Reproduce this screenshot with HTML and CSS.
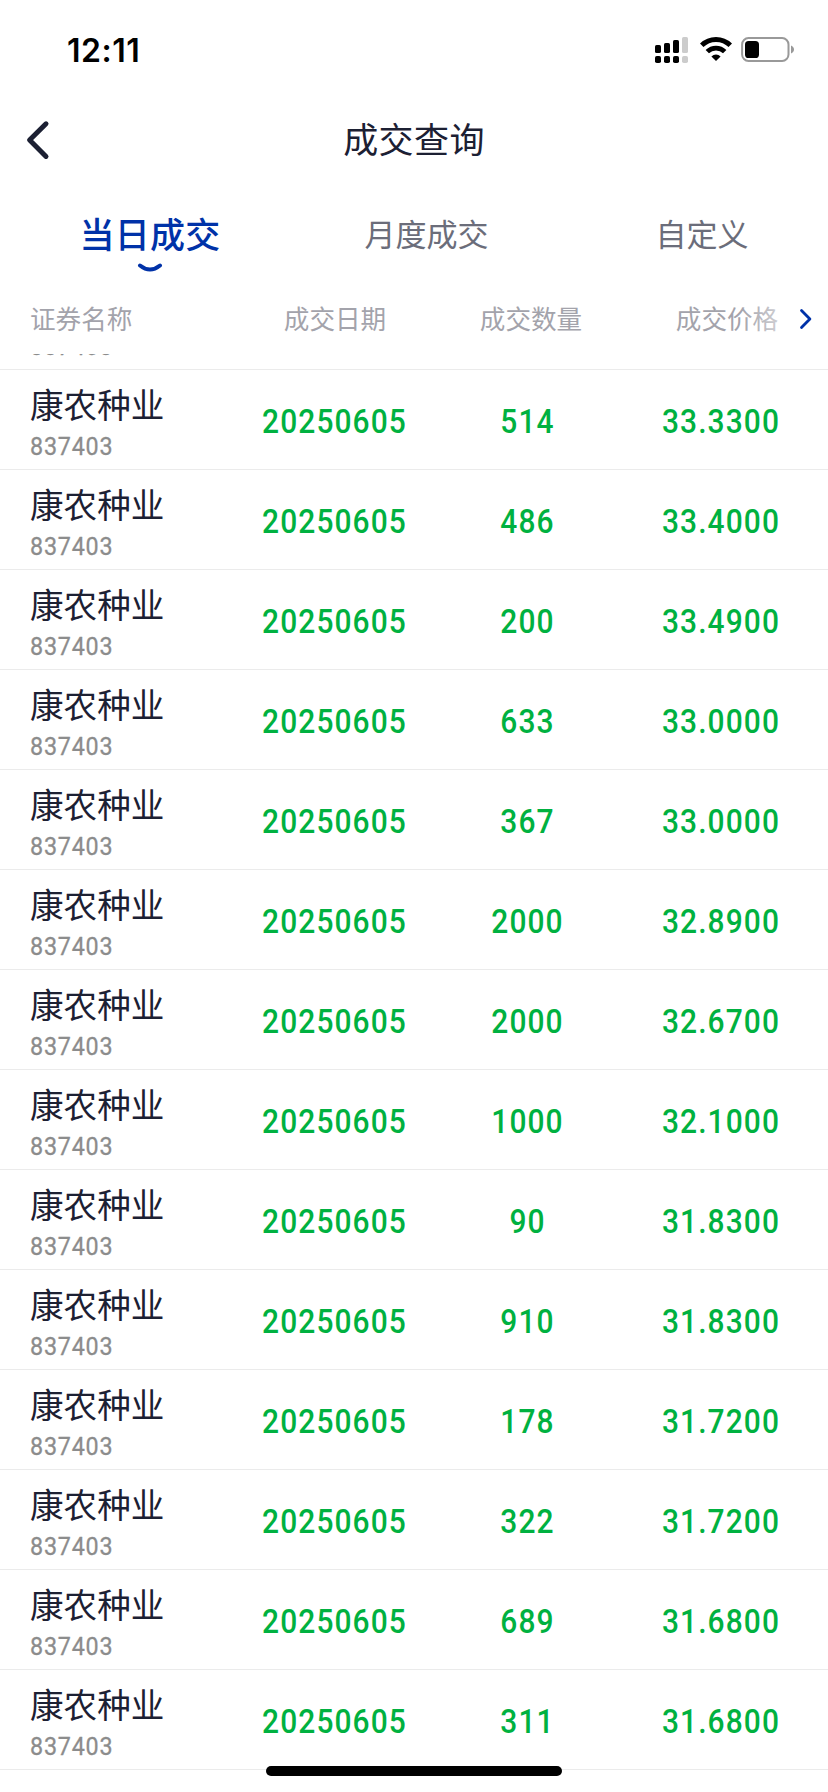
FILE: index.html
```
<!DOCTYPE html>
<html lang="zh-CN">
<head>
    <meta charset="UTF-8">
    <meta name="viewport" content="width=device-width, initial-scale=1.0">
    <title>成交查询</title>
    <link rel="stylesheet" href="styles.css">
</head>
<body>
<div class="status-bar">
    <span class="time">12:11</span>
    <div class="status-icons">
        <svg class="signal" width="34" height="28" viewBox="0 0 34 28">
            <rect x="0" y="9" width="6" height="8" rx="1.6"/>
            <rect x="9" y="7" width="6" height="10" rx="1.6"/>
            <rect x="18" y="4" width="6" height="13" rx="1.6"/>
            <rect class="off" x="27" y="1" width="6" height="16" rx="1.6"/>
            <rect x="0" y="20" width="6" height="7" rx="1.8"/>
            <rect x="9" y="20" width="6" height="7" rx="1.8"/>
            <rect x="18" y="20" width="6" height="7" rx="1.8"/>
            <rect class="off" x="27" y="20" width="6" height="7" rx="1.8"/>
        </svg>
        <svg class="wifi" width="32" height="28" viewBox="0 0 32 28">
            <path d="M1.7 9.3a20.3 20.3 0 0 1 28.6 0" fill="none" stroke="#000" stroke-width="5"/>
            <path d="M7.3 15.6a12.4 12.4 0 0 1 17.4 0" fill="none" stroke="#000" stroke-width="4.8"/>
            <path d="M16 25l-4.6-4.5a6.5 6.5 0 0 1 9.2 0z"/>
        </svg>
        <svg class="battery" width="54" height="28" viewBox="0 0 54 28">
            <rect x="1.1" y="2.1" width="46.4" height="22.8" rx="6.4" fill="none" stroke="#999" stroke-width="2"/>
            <rect x="4" y="5" width="14" height="17" rx="3.6"/>
            <path d="M50 9.5c4 1.6 4 6.4 0 8z" fill="#999"/>
        </svg>
    </div>
</div>

<div class="nav-bar">
    <svg class="back" width="24" height="40" viewBox="0 0 24 40">
        <path d="M20 3.8L3.6 20L20 36.4"/>
    </svg>
    <h1>成交查询</h1>
</div>

<div class="tabs">
    <div class="tab active">
        当日成交
        <svg class="smile" width="26" height="10" viewBox="0 0 26 10">
            <path d="M3 2.5q10 8 20 0"/>
        </svg>
    </div>
    <div class="tab">月度成交</div>
    <div class="tab custom">自定义</div>
</div>

<div class="table-head">
    <span class="name-head">证券名称</span>
    <span>成交日期</span>
    <span>成交数量</span>
    <span>成交价格</span>
    <div class="fade"></div>
    <svg class="more" width="14" height="22" viewBox="0 0 14 22">
        <path d="M2.5 2.5l8.4 8.5-8.4 8.5"/>
    </svg>
</div>

<div class="list">
    <div class="rows" id="rows"></div>
</div>

<div class="home-indicator"></div>

<script>
    const trades = [
        ['514', '33.3300'],
        ['486', '33.4000'],
        ['200', '33.4900'],
        ['633', '33.0000'],
        ['367', '33.0000'],
        ['2000', '32.8900'],
        ['2000', '32.6700'],
        ['1000', '32.1000'],
        ['90', '31.8300'],
        ['910', '31.8300'],
        ['178', '31.7200'],
        ['322', '31.7200'],
        ['689', '31.6800'],
        ['311', '31.6800']
    ];

    const rows = document.getElementById('rows');

    // row that is scrolled under the header, only its code still shows
    rows.innerHTML = '<div class="row"><div class="stock"><div class="name"></div><div class="code">837403</div></div></div>';

    trades.forEach(function (trade) {
        const row = document.createElement('div');
        row.className = 'row';
        row.innerHTML =
            '<div class="stock"><div class="name">康农种业</div><div class="code">837403</div></div>' +
            '<div class="num">20250605</div>' +
            '<div class="num">' + trade[0] + '</div>' +
            '<div class="num">' + trade[1] + '</div>';
        rows.appendChild(row);
    });
</script>
</body>
</html>
```

FILE: styles.css
```
/* General Styles */
* {
    box-sizing: border-box;
}

body {
    margin: 0;
    width: 828px;
    height: 1792px;
    overflow: hidden;
    position: relative;
    display: flex;
    flex-direction: column;
    background-color: #fff;
    color: #1c2033;
    font-family: "Noto Sans CJK SC", sans-serif;
}

svg {
    display: block;
}

/* Status bar */
.status-bar {
    height: 100px;
    padding: 36px 33px 0 66px;
    display: flex;
    justify-content: space-between;
    align-items: flex-start;
}

.time {
    padding-left: 1px;
    font-family: Inter, sans-serif;
    font-size: 32px;
    font-weight: 600;
    line-height: 29px;
    letter-spacing: 0.5px;
    color: #000;
}

.status-icons {
    display: flex;
}

.signal .off {
    fill: #ccc;
}

.wifi {
    margin-left: 11px;
}

.battery {
    margin-left: 9px;
}

/* Title */
.nav-bar {
    height: 80px;
    display: grid;
    grid-template-columns: 100px 1fr 100px;
    align-items: center;
}

.back {
    margin-left: 26px;
}

.back path,
.smile path,
.more path {
    fill: none;
    stroke: #1c2033;
    stroke-width: 5;
    stroke-linecap: round;
    stroke-linejoin: round;
}

.nav-bar h1 {
    margin: 0;
    font-size: 35px;
    font-weight: 400;
    line-height: 75px;
    height: 80px;
    letter-spacing: 0.4px;
    text-align: center;
}

/* Tabs */
.tabs {
    height: 110px;
    padding: 23px 0 0;
    display: grid;
    grid-template-columns: 300px 253px 275px;
    line-height: 60px;
    font-size: 31px;
    color: #6b6d7a;
    text-align: center;
}

.tab.active {
    font-size: 35px;
    font-weight: 500;
    letter-spacing: 0.3px;
    color: #0032a8;
}

.custom {
    padding-left: 23px;
}

.smile {
    margin: 0 auto;
}

.smile path {
    stroke: #0032a8;
    stroke-width: 4;
}

/* Table header */
.table-head {
    height: 64px;
    position: relative;
    display: grid;
    grid-template-columns: 237px 196px 196px 196px;
    font-size: 25.6px;
    line-height: 56px;
    color: #a3a3ab;
    text-align: center;
}

.name-head {
    padding-left: 30px;
    text-align: left;
}

.fade {
    position: absolute;
    right: 38px;
    top: 0;
    width: 50px;
    height: 60px;
    background: linear-gradient(to right, rgba(255, 255, 255, 0), rgba(255, 255, 255, 0.6));
}

.more {
    position: absolute;
    right: 15px;
    top: 18px;
}

.more path {
    stroke: #0032a8;
    stroke-width: 2.8;
}

/* Trade list */
.list {
    flex: 1;
    overflow: hidden;
}

.rows {
    margin-top: -84px;
}

.row {
    height: 100px;
    display: grid;
    grid-template-columns: 238px 193px 193px 194px;
    border-bottom: 1px solid #ebebeb;
}

.stock {
    padding: 11px 0 0 30px;
}

.name {
    height: 47px;
    font-size: 33.6px;
    line-height: 46px;
}

/* Narrow digits */
.code,
.num {
    font-family: Roboto, sans-serif;
    transform: scaleX(0.88);
}

.code {
    font-size: 26.5px;
    line-height: 36px;
    letter-spacing: 0.9px;
    color: #8c8c8c;
    -webkit-text-stroke: 0.3px #8c8c8c;
    transform-origin: left;
}

.num {
    font-size: 34px;
    font-weight: 500;
    line-height: 102px;
    letter-spacing: 1.25px;
    text-align: center;
    color: #00b140;
}

.home-indicator {
    position: absolute;
    left: 266px;
    bottom: 16px;
    width: 296px;
    height: 10px;
    border-radius: 5px;
    background-color: #000;
}
```
